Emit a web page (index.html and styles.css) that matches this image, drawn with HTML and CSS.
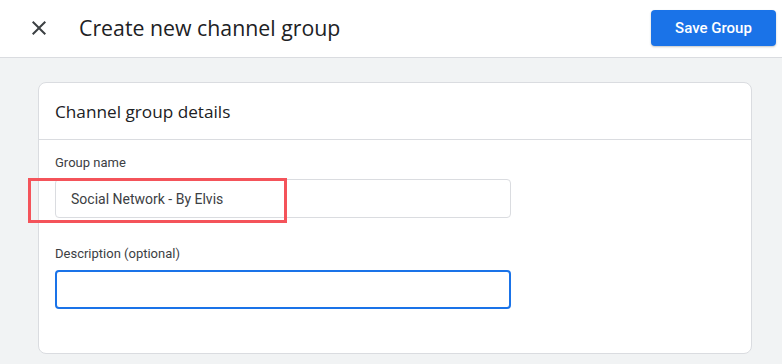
FILE: index.html
```html
<!DOCTYPE html>
<html>
<head>
<meta charset="utf-8">
<link rel="stylesheet" href="styles.css">
</head>
<body>
<header class="topbar">
  <button class="close-btn" aria-label="Close">
    <svg width="24" height="24" viewBox="0 0 24 24"><path d="M19 6.41L17.59 5 12 10.59 6.41 5 5 6.41 10.59 12 5 17.59 6.41 19 12 13.41 17.59 19 19 17.59 13.41 12z" fill="#3c4043"/></svg>
  </button>
  <h1 class="title">Create new channel group</h1>
  <button class="save-btn">Save Group</button>
</header>
<main class="content">
  <section class="card">
    <div class="card-head">Channel group details</div>
    <div class="card-body">
      <label class="field-label">Group name</label>
      <div class="field-wrap">
        <div class="input">Social Network - By Elvis</div>
        <div class="highlight"></div>
      </div>
      <label class="field-label second">Description (optional)</label>
      <div class="input focused"></div>
    </div>
  </section>
</main>
</body>
</html>
```
FILE: styles.css
```css
* { box-sizing: border-box; }
html, body { margin: 0; padding: 0; }
body {
  width: 782px;
  height: 364px;
  overflow: hidden;
  background: #f1f3f4;
  font-family: Roboto, "Noto Sans", Arial, sans-serif;
  color: #202124;
}
.topbar {
  height: 58px;
  background: #fff;
  border-bottom: 1px solid #dadce0;
  display: flex;
  align-items: center;
  padding: 0 6px 2px 27px;
}
.close-btn {
  width: 24px;
  height: 24px;
  padding: 0;
  border: 0;
  background: none;
  display: flex;
}
.title {
  margin: 0 0 0 28px;
  font-family: "Open Sans", Roboto, sans-serif;
  font-weight: 400;
  font-size: 21.3px;
  color: #202124;
  flex: 1;
}
.save-btn {
  width: 125px;
  height: 36px;
  border: 0;
  border-radius: 4px;
  background: #1a73e8;
  color: #fff;
  font-family: Roboto, sans-serif;
  font-weight: 500;
  font-size: 15px;
  box-shadow: 0 1px 2px rgba(60,64,67,.3);
}
.content {
  padding: 24px 30px 0 38px;
}
.card {
  background: #fff;
  border: 1px solid #dadce0;
  border-radius: 8px;
  height: 272px;
}
.card-head {
  height: 57px;
  border-bottom: 1px solid #dadce0;
  padding: 0 16px;
  display: flex;
  align-items: center;
  font-family: "Open Sans", Roboto, sans-serif;
  font-size: 17.2px;
  color: #202124;
}
.card-body {
  padding: 13px 240px 0 16px;
}
.field-label {
  display: block;
  font-size: 13px;
  line-height: 20px;
  color: #3c4043;
  margin-bottom: 6px;
}
.field-label.second { margin-top: 26px; }
.field-wrap { position: relative; }
.input {
  height: 39px;
  border: 1px solid #dadce0;
  border-radius: 4px;
  padding: 0 15px;
  display: flex;
  align-items: center;
  font-size: 14px;
  color: #3c4043;
}
.input.focused {
  border: 2px solid #1a73e8;
}
.highlight {
  position: absolute;
  left: -27px;
  top: -1px;
  width: 259px;
  height: 45px;
  border: 3px solid #f4535a;
}
```
